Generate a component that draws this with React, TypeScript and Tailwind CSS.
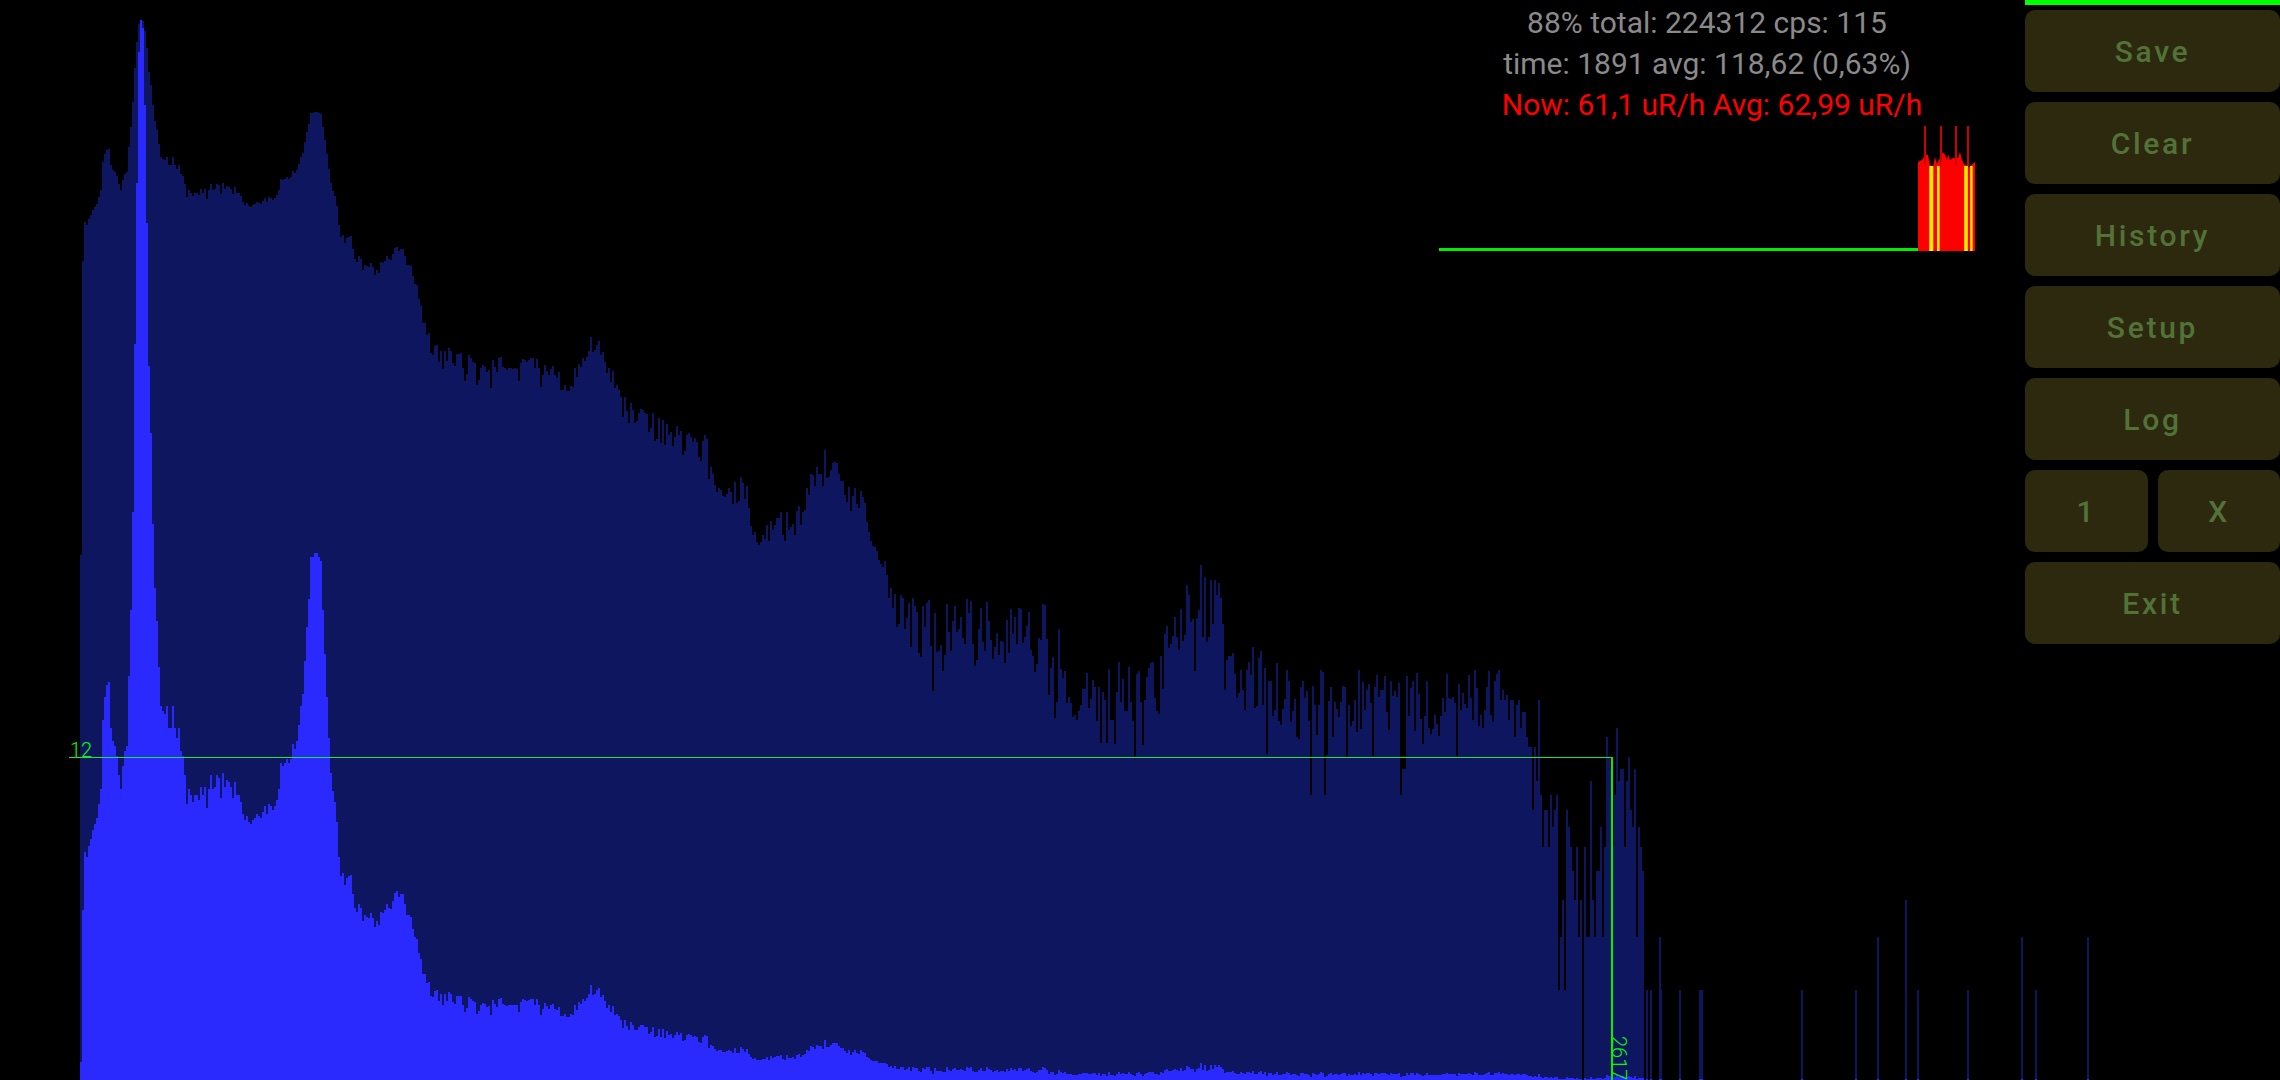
const DARK = "#0e1660";
const BRIGHT = "#2a2aff";

// spectrum outline: [x, top y] of the log curve, read off the screen
const curve: [number, number][] = [
  [82, 261], [84, 222], [86, 225], [88, 219], [92, 210], [96, 204], [100, 190], [102, 162], [105, 150], [108, 149],
  [110, 165], [113, 172], [115, 172], [118, 184], [120, 190], [123, 175], [126, 172], [128, 147], [130, 127], [132, 102],
  [134, 68], [136, 42], [138, 24], [140, 20], [142, 21], [144, 31], [146, 48], [148, 72], [150, 85], [152, 105],
  [154, 121], [156, 130], [158, 144], [160, 157], [166, 162], [172, 162], [178, 167], [184, 182], [192, 192], [204, 188],
  [220, 187], [234, 192], [246, 203], [262, 204], [274, 198], [284, 176], [296, 170], [302, 152], [310, 113], [320, 113],
  [325, 147], [330, 183], [335, 200], [340, 237], [350, 237], [356, 257], [366, 267], [376, 272], [386, 260], [396, 245],
  [404, 257], [410, 270], [417, 285], [420, 313], [423, 323], [427, 330], [430, 352], [437, 350], [450, 358], [480, 367],
  [520, 363], [545, 367], [565, 387], [570, 390], [575, 373], [583, 355], [590, 345], [597, 343], [603, 360], [610, 373],
  [617, 395], [622, 407], [640, 423], [660, 430], [680, 437], [693, 452], [705, 447], [710, 480], [730, 490], [745, 490],
  [750, 517], [757, 543], [765, 527], [785, 527], [800, 513], [810, 483], [815, 463], [830, 463], [840, 483], [852, 500],
  [865, 507], [873, 543], [880, 563], [890, 593], [897, 617], [905, 623], [915, 630], [1060, 640], [1068, 690], [1160, 690],
  [1163, 637], [1177, 627], [1197, 607], [1220, 607], [1225, 633], [1240, 675], [1273, 690], [1300, 705], [1500, 705],
];

// the last part of the curve is so sparse it is taken bin by bin
const tail = [
  700, 690, 700, 695, 720, 700, 700, 737, 705, 700, 728, 712, 712, 737, 747, 747, 810, 747, 781, 700,
  795, 847, 810, 810, 847, 795, 827, 810, 795, 990, 937, 900, 990, 810, 827, 847, 871, 900, 847, 937,
  900, 1080, 847, 937, 937, 781, 900, 937, 871, 871, 827, 937, 847, 737, 757, 769, 847, 795, 728, 781,
  769, 769, 847, 781, 757, 810, 827, 769, 937, 827, 847, 871,
];

const overrides: Record<number, number> = {
  80: 555, 1200: 565, 1204: 577, 1210: 580, 1218: 583, 1310: 795, 1324: 795, 1346: 757, 1400: 795, 1402: 769, 1404: 769,
};

const spikes: [number, number][] = [
  [1646, 990], [1650, 990], [1659, 937], [1660, 990], [1679, 990], [1699, 990], [1701, 990], [1801, 990], [1855, 990],
  [1877, 937], [1905, 900], [1917, 990], [1967, 990], [2021, 937], [2035, 990], [2087, 937],
];

function makeRandom(seed: number) {
  let s = seed;
  return () => {
    s = (s + 0x6d2b79f5) | 0;
    let t = Math.imul(s ^ (s >>> 15), 1 | s);
    t = (t + Math.imul(t ^ (t >>> 7), 61 | t)) ^ t;
    return ((t ^ (t >>> 14)) >>> 0) / 4294967296;
  };
}

function curveAt(x: number) {
  for (let i = 1; i < curve.length; i++) {
    const [x1, y1] = curve[i];
    if (x <= x1) {
      const [x0, y0] = curve[i - 1];
      return y0 + ((y1 - y0) * (x - x0)) / (x1 - x0);
    }
  }
  return 705;
}

function noiseAt(x: number) {
  if (x < 166) return 0;
  if (x >= 296 && x < 340) return 2;
  if (x < 420) return 10;
  if (x < 620) return 16;
  if (x < 900) return 26;
  return 62;
}

function buildSpectrum() {
  const random = makeRandom(2617);
  let dark = "";
  let bright = "";
  const add = (x: number, y: number, w = 2) => {
    if (y >= 1080) return;
    const h = Math.max(1, Math.round(1060 * Math.exp(-0.0076 * (y - 20))));
    dark += `M${x} 1080V${y}h${w}V1080z`;
    bright += `M${x} 1080V${1080 - h}h${w}V1080z`;
  };
  for (let x = 80; x < 1644; x += 2) {
    let y: number;
    if (overrides[x] !== undefined) {
      y = overrides[x];
    } else if (x >= 1500) {
      y = tail[(x - 1500) / 2];
    } else {
      const amp = noiseAt(x);
      y = curveAt(x) + amp * (random() - 0.5) * 1.15;
      if (random() < 0.14) y += amp * random();
    }
    add(x, Math.round(y));
  }
  spikes.forEach(([x, y]) => add(x, y));
  return { dark, bright };
}

const spectrum = buildSpectrum();

// rate history under the status text, x relative to the block at 1439, y relative to its top at 125
const rateTops: [number, number][] = [
  [479, 37], [483, 35], [486, 30], [489, 30], [491, 40], [494, 42], [496, 32], [498, 39], [501, 33], [504, 27],
  [506, 30], [508, 35], [509, 29], [511, 35], [514, 33], [519, 33], [521, 27], [523, 35], [525, 39], [530, 42],
  [536, 37],
];

function RateChart() {
  const red = rateTops.map(([x, y]) => `${x},${y}`).join(" ");
  return (
    <svg width="536" height="127" className="block">
      <rect x="0" y="123" width="480" height="3" fill="#00ee00" />
      <polygon points={`479,126 ${red} 536,126`} fill="#ff0000" />
      {[485, 501, 516, 528].map((x) => (
        <rect key={x} x={x} y="1" width="2" height="40" fill="#d00000" />
      ))}
      {[
        [490.3, 4],
        [498, 2.6],
        [525.2, 3.6],
        [531.2, 2.4],
      ].map(([x, w]) => (
        <rect key={x} x={x} y="41" width={w} height="85" fill="#ffee00" />
      ))}
    </svg>
  );
}

function PanelButton({ label, className = "" }: { label: string; className?: string }) {
  return (
    <button
      type="button"
      className={`flex h-[82px] items-center justify-center rounded-[10px] bg-[#2d290f] text-[30px] font-medium tracking-[2.7px] text-[#527238] ${className}`}
    >
      {label}
    </button>
  );
}

export default function App() {
  return (
    <div className="flex h-[1080px] w-[2280px] overflow-hidden bg-black font-[Roboto,sans-serif]">
      <div className="relative w-[2025px] shrink-0">
        <svg width="2280" height="1080" className="absolute left-0 top-0" shapeRendering="crispEdges">
          <path d={spectrum.dark} fill={DARK} />
          <path d={spectrum.bright} fill={BRIGHT} />
          <rect x="69" y="757" width="1543" height="1" fill="#1fe53a" />
          <rect x="1611" y="757" width="1.5" height="323" fill="#00f000" />
        </svg>

        <div className="absolute left-[70px] top-[738px] text-[20px] font-light leading-[24px] text-[#00ff00]">12</div>
        <div className="absolute left-[1607px] top-[1036px] text-[20px] font-light leading-[24px] text-[#00ff00] [writing-mode:vertical-rl]">
          2617
        </div>

        <div className="absolute left-[1439px] top-[2px] flex w-[536px] flex-col items-center">
          <p className="text-[30px] leading-[41px] text-[#8a8a8a]">88% total: 224312 cps: 115</p>
          <p className="text-[30px] leading-[41px] text-[#8a8a8a]">time: 1891 avg: 118,62 (0,63%)</p>
          <p className="pl-[10px] text-[30px] leading-[41px] text-[#ff0000]">Now: 61,1 uR/h Avg: 62,99 uR/h</p>
          <RateChart />
        </div>
      </div>

      <div className="flex w-[255px] flex-col gap-[10px]">
        <div className="-mb-[5px] h-[5px] bg-[#00ff00]" />
        <PanelButton label="Save" />
        <PanelButton label="Clear" />
        <PanelButton label="History" />
        <PanelButton label="Setup" />
        <PanelButton label="Log" />
        <div className="flex gap-[10px]">
          <PanelButton label="1" className="w-[123px]" />
          <PanelButton label="X" className="w-[122px]" />
        </div>
        <PanelButton label="Exit" />
      </div>
    </div>
  );
}
